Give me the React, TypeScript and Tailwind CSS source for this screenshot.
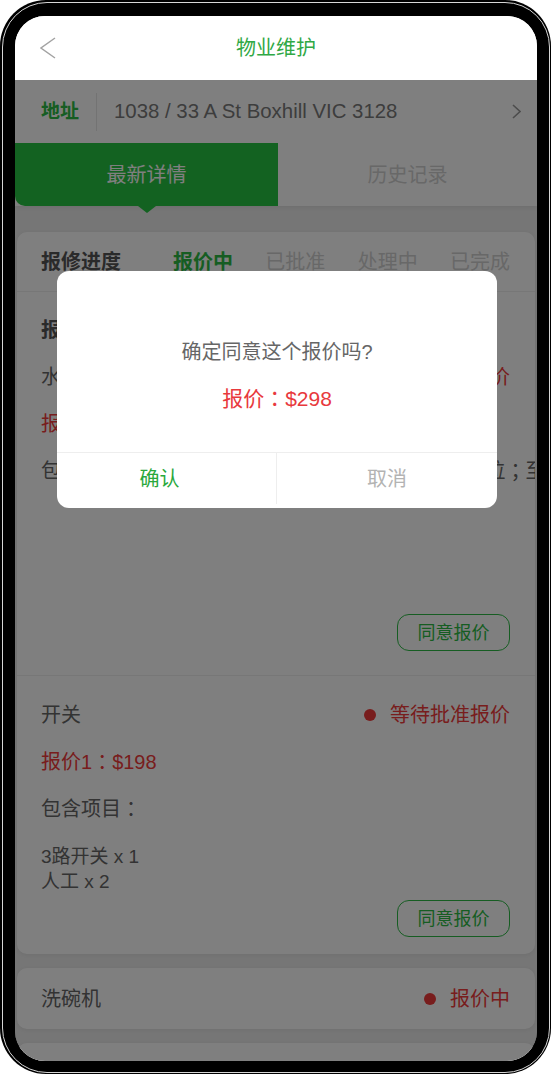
import React from "react";

function StatusDot() {
  return <span className="h-[12px] w-[12px] rounded-full bg-[#f03a3a]" />;
}

function P({ c }: { c: string }) {
  return <span className="font-['Noto_Sans_CJK_TC',sans-serif]">{c}</span>;
}

export default function App() {
  return (
    <div className="h-[1074px] w-[551px] bg-white font-['Liberation_Sans','Noto_Sans_CJK_SC',sans-serif]">
      <div className="relative h-full w-full rounded-[46px] bg-black pb-[13px] pl-[15px] pr-[14px] pt-[16px]">
        <div className="pointer-events-none absolute inset-[1.5px] rounded-[45px] border border-[#d6d6d6]" />
        <div className="relative flex h-full w-full flex-col overflow-hidden rounded-[30px] bg-[#ececec]">
          {/* header */}
          <div className="grid h-[64px] shrink-0 grid-cols-[1fr_auto_1fr] items-center bg-white">
            <div className="pl-[25px]">
              <svg width="16" height="22" viewBox="0 0 16 22" className="block">
                <polyline points="15,1 1,11 15,21" fill="none" stroke="#a3a3a3" strokeWidth="1.5" />
              </svg>
            </div>
            <span className="text-[20px] leading-none text-[#30a845]">物业维护</span>
            <div />
          </div>

          {/* address */}
          <div className="flex h-[63px] shrink-0 items-center bg-white pl-[26px] pr-[16px]">
            <span className="text-[19px] font-bold leading-none text-[#2dbb45]">地址</span>
            <div className="ml-[17px] h-[38px] w-px bg-[#e6e6e6]" />
            <span className="ml-[17px] flex-1 text-[20.4px] leading-none text-[#7a7a7a]">
              1038 / 33 A St Boxhill VIC 3128
            </span>
            <svg width="9" height="15" viewBox="0 0 9 15" className="block">
              <polyline points="1,1 8,7.5 1,14" fill="none" stroke="#9a9a9a" strokeWidth="1.6" />
            </svg>
          </div>

          {/* tabs */}
          <div className="relative z-[1] flex h-[63px] shrink-0 bg-white shadow-[0_2px_4px_rgba(0,0,0,0.06)]">
            <div className="relative flex w-[263px] items-center justify-center rounded-bl-[10px] bg-[#27c442] text-[20px] leading-none text-white">
              最新详情
              <span className="absolute left-1/2 top-full h-0 w-0 -translate-x-1/2 border-x-[9px] border-t-[7px] border-x-transparent border-t-[#27c442]" />
            </div>
            <div className="flex flex-1 items-center justify-center text-[20px] leading-none text-[#d0d0d0]">
              历史记录
            </div>
          </div>

          {/* card 1 */}
          <div className="mx-[2px] mt-[26px] shrink-0 rounded-[10px] bg-white shadow-[0_1px_4px_rgba(0,0,0,0.06)]">
            <div className="flex h-[60px] items-center border-b border-[#eeeeee] pl-[24px] pr-[25px] text-[20px] leading-none">
              <span className="w-[132px] font-bold text-[#555555]">报修进度</span>
              <div className="flex flex-1 justify-between">
                <span className="font-bold text-[#2dbb45]">报价中</span>
                <span className="text-[#d0d0d0]">已批准</span>
                <span className="text-[#d0d0d0]">处理中</span>
                <span className="text-[#d0d0d0]">已完成</span>
              </div>
            </div>

            {/* item 1 */}
            <div className="flex flex-col border-b border-[#eeeeee] pb-[24px] pl-[24px] pr-[25px] pt-[14px] text-[20px] leading-none">
              <div className="flex h-[47px] items-center font-bold text-[#555555]">报修项目</div>
              <div className="flex h-[47px] items-center justify-between">
                <span className="text-[#666666]">水龙头</span>
                <span className="flex items-center gap-[14px] text-[#f03a3a]">
                  <StatusDot />
                  等待批准报价
                </span>
              </div>
              <div className="flex h-[47px] items-center text-[#f03a3a]">
                报价1<P c="：" />$298
              </div>
              <div className="-mr-[25px] flex h-[47px] items-center overflow-hidden whitespace-nowrap text-[#666666]">
                包含项目<P c="：" />水龙头 x 1<P c="；" />更换阀门 x 1<P c="；" />安装调试到位<P c="；" />至少保修一年
              </div>
              <div className="mt-[120px] flex justify-end">
                <span className="flex h-[37px] w-[113px] items-center justify-center rounded-[12px] border border-[#2dbb45] text-[18px] text-[#2dbb45]">
                  同意报价
                </span>
              </div>
            </div>

            {/* item 2 */}
            <div className="flex flex-col pb-[17px] pl-[24px] pr-[25px] pt-[15px] text-[20px] leading-none">
              <div className="flex h-[47px] items-center justify-between">
                <span className="text-[#666666]">开关</span>
                <span className="flex items-center gap-[14px] text-[#f03a3a]">
                  <StatusDot />
                  等待批准报价
                </span>
              </div>
              <div className="flex h-[47px] items-center text-[#f03a3a]">
                报价1<P c="：" />$198
              </div>
              <div className="flex h-[47px] items-center text-[#666666]">
                包含项目<P c="：" />
              </div>
              <div className="mt-[12px] flex flex-col text-[19px] leading-[25px] text-[#666666]">
                <span>3路开关 x 1</span>
                <span>人工 x 2</span>
              </div>
              <div className="mt-[6px] flex justify-end">
                <span className="flex h-[37px] w-[113px] items-center justify-center rounded-[12px] border border-[#2dbb45] text-[18px] text-[#2dbb45]">
                  同意报价
                </span>
              </div>
            </div>
          </div>

          {/* card 3 */}
          <div className="mx-[2px] mt-[14px] flex h-[61px] shrink-0 items-center justify-between rounded-[10px] bg-white pl-[24px] pr-[25px] text-[20px] leading-none shadow-[0_1px_4px_rgba(0,0,0,0.06)]">
            <span className="text-[#666666]">洗碗机</span>
            <span className="flex items-center gap-[14px] text-[#f03a3a]">
              <StatusDot />
              报价中
            </span>
          </div>

          {/* card 4 (cut off) */}
          <div className="mx-[2px] mt-[14px] h-[61px] shrink-0 rounded-[10px] bg-white shadow-[0_1px_4px_rgba(0,0,0,0.06)]" />

          {/* overlay */}
          <div className="absolute inset-x-0 bottom-0 top-[64px] z-20 bg-black/50" />

          {/* modal */}
          <div className="absolute left-[42px] top-[255px] z-30 w-[440px] overflow-hidden rounded-[12px] bg-white">
            <div className="flex h-[181px] flex-col items-center pt-[69px]">
              <span className="text-[20px] leading-[24px] text-[#666666]">确定同意这个报价吗?</span>
              <span className="mt-[20px] text-[21px] leading-[26px] text-[#e8393d]">
                报价<P c="：" />$298
              </span>
            </div>
            <div className="flex h-[56px] border-t border-[#eeeeee] pb-[4px] text-[20px] leading-none">
              <div className="flex w-1/2 shrink-0 items-center justify-center border-r border-[#eeeeee] pr-[14px] text-[#2aa83c]">
                确认
              </div>
              <div className="flex w-1/2 shrink-0 items-center justify-center text-[#b3b3b3]">取消</div>
            </div>
          </div>
        </div>
      </div>
    </div>
  );
}
